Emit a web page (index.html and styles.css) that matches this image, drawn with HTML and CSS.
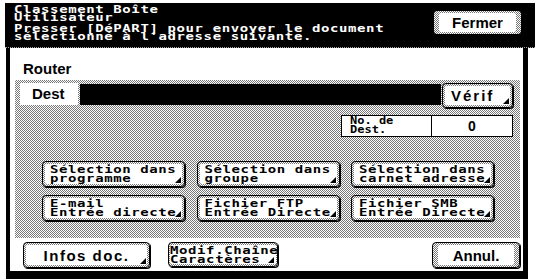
FILE: index.html
```html
<!DOCTYPE html>
<html lang="fr">
<head>
<meta charset="utf-8">
<title>Classement Boîte Utilisateur</title>
<link rel="stylesheet" href="styles.css">
</head>
<body>
<div class="screen">
  <header class="top">
    <div class="msg">
      <div class="mt">
        <div class="title">Classement Boîte<br>Utilisateur</div>
        <div class="note">Presser [DéPART] pour envoyer le document<br>sélectionné à l'adresse suivante.</div>
      </div>
    </div>
    <div class="btn wide close"><span class="face center label">Fermer</span></div>
  </header>
  <section class="panel">
    <div class="panel-title">Router</div>
    <div class="pattern">
      <div class="dest-row">
        <div class="dest-label">Dest</div>
        <div class="dest-field"></div>
        <div class="btn tri verif"><span class="face label verif-text">Vérif</span></div>
      </div>
      <div class="count-row">
        <div class="count">
          <div class="count-label"><span class="mt small">No. de<br>Dest.</span></div>
          <div class="count-value">0</div>
        </div>
      </div>
      <div class="grid">
        <div class="btn tri"><span class="face mono"><span class="mt">Sélection dans<br>programme</span></span></div>
        <div class="btn tri"><span class="face mono"><span class="mt">Sélection dans<br>groupe</span></span></div>
        <div class="btn tri"><span class="face mono"><span class="mt">Sélection dans<br>carnet adresse</span></span></div>
        <div class="btn tri"><span class="face mono"><span class="mt">E-mail<br>Entrée directe</span></span></div>
        <div class="btn tri"><span class="face mono"><span class="mt">Fichier FTP<br>Entrée Directe</span></span></div>
        <div class="btn tri"><span class="face mono"><span class="mt">Fichier SMB<br>Entrée Directe</span></span></div>
      </div>
    </div>
    <div class="bottom">
      <div class="btn tri info"><span class="face center label spaced">Infos doc.</span></div>
      <div class="btn tri modif"><span class="face mono tight"><span class="mt">Modif.Chaîne<br>Caractères</span></span></div>
      <div class="btn wide annul"><span class="face center label">Annul.</span></div>
    </div>
  </section>
</div>
</body>
</html>
```

FILE: styles.css
```css
* { box-sizing: border-box; margin: 0; padding: 0; }

body {
  background: #fff;
  width: 535px;
  height: 279px;
  overflow: hidden;
}

.screen {
  margin: 3px 0 0 5px;
  width: 530px;
  height: 276px;
  display: flex;
  flex-direction: column;
}

.top {
  background: #000;
  height: 45px;
  display: flex;
  align-items: flex-start;
  border-bottom: 1px dotted #a0a0a0;
}

/* wide, short "pixel" monospace text */
.mt {
  display: block;
  font: bold 14px/10.9px "DejaVu Sans Mono", monospace;
  letter-spacing: 0.6px;
  white-space: nowrap;
  transform: scaleY(0.78);
  transform-origin: left center;
}

.msg {
  padding: 2px 0 0 9px;
  color: #fff;
}

.msg .mt { transform-origin: left top; }

.note { margin-top: 2.5px; }

.btn {
  position: relative;
  border: 1px solid #000;
  border-radius: 4px;
  padding: 2px;
  background: repeating-conic-gradient(#777 0 25%, #fff 0 50%) 0 0 / 2px 2px;
  box-shadow: 1px 1px 0 #000;
}

.btn.wide { padding: 2px 5px; }

.face {
  display: flex;
  flex-direction: column;
  justify-content: center;
  height: 100%;
  background: #fff;
  border-radius: 2px;
  color: #000;
  white-space: nowrap;
}

.face.center { align-items: center; }

.label {
  font: bold 15px/1 "Liberation Sans", Arial, sans-serif;
}

.label.spaced { letter-spacing: 1.5px; }

.mono { padding-left: 5px; }

.mono.tight { padding-left: 0; }

.tri::after {
  content: "";
  position: absolute;
  right: 3px;
  bottom: 3px;
  width: 0;
  height: 0;
  border-left: 6px solid transparent;
  border-bottom: 6px solid #000;
}

.close {
  margin: 7px 13px 0 auto;
  width: 89px;
  height: 25px;
}

.panel {
  margin-left: 1px;
  width: 522px;
  height: 231px;
  border: solid #000;
  border-width: 0 5px 8px 4px;
  background: #fff;
  display: flex;
  flex-direction: column;
}

.panel-title {
  padding: 12px 0 0 13px;
  height: 30px;
  font: bold 15px/18px "Liberation Sans", Arial, sans-serif;
}

.pattern {
  margin: 2px 3px 0 5px;
  height: 158px;
  padding: 3px 7px 0 5px;
  background: repeating-conic-gradient(#777 0 25%, #fff 0 50%) 0 0 / 2px 2px;
}

.dest-row {
  display: flex;
  align-items: flex-start;
  height: 25px;
}

.dest-label {
  width: 58px;
  height: 22px;
  background: #fff;
  padding-left: 12px;
  font: bold 15px/22px "Liberation Sans", Arial, sans-serif;
}

.dest-field {
  flex: 1;
  height: 21px;
  margin: 1px 1px 0 2px;
  background: #000;
}

.verif {
  width: 71px;
  height: 25px;
}

.verif-text {
  padding-left: 6px;
  letter-spacing: 2px;
}

.count-row {
  display: flex;
  justify-content: flex-end;
  margin-top: 7px;
}

.count {
  width: 172px;
  height: 22px;
  border: 1px solid #000;
  background: #fff;
  display: flex;
}

.count-label {
  width: 90px;
  border-right: 1px solid #000;
  padding-left: 8px;
  display: flex;
  align-items: center;
}

.mt.small {
  font-size: 12px;
  line-height: 10.6px;
  letter-spacing: 0;
  transform: scaleY(0.8);
}

.count-value {
  flex: 1;
  text-align: center;
  font: bold 14px/20px "Liberation Sans", Arial, sans-serif;
}

.grid {
  display: grid;
  grid-template-columns: repeat(3, 143px);
  grid-auto-rows: 26px;
  column-gap: 11.5px;
  row-gap: 8px;
  margin: 24px 0 0 22px;
}

.bottom {
  display: flex;
  align-items: flex-start;
  gap: 18px;
  margin-top: 4px;
  padding: 0 3px 0 13px;
}

.info { width: 127px; height: 26px; }
.modif { width: 110px; height: 25px; padding: 2px 1px; }
.annul { width: 88px; height: 26px; margin-left: auto; }
```
